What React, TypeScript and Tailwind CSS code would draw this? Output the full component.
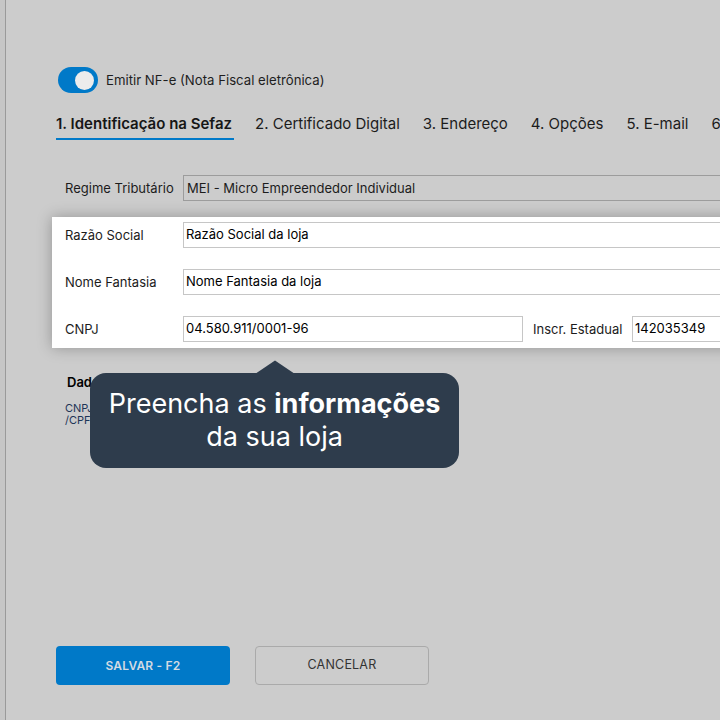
import React from "react";

export default function App() {
  return (
    <div className="w-[720px] h-[720px] bg-[#cccccc] flex overflow-hidden relative font-['Inter',sans-serif] text-[#1c1c1c]">
      <div className="w-[6px] shrink-0 bg-[#c6c6c6] border-r border-[#9a9a9a]" />
      <div className="flex-1 flex flex-col pl-[50px] pt-[67px] pb-[35px] min-w-0">
        <div className="flex items-center gap-2 ml-[2px] h-[26px]">
          <div className="w-[40px] h-[26px] rounded-full bg-[#0079c8] flex items-center justify-end pr-[4px]">
            <div className="w-[19px] h-[19px] rounded-full bg-[#ececec]" />
          </div>
          <span className="text-[13.2px] text-[#1e1e1e] pt-[2px]">Emitir NF-e (Nota Fiscal eletrônica)</span>
        </div>

        <div className="flex gap-[23px] mt-[21px] text-[15px] leading-[20px] whitespace-nowrap">
          <div className="font-semibold pb-[4px] border-b-2 border-[#0079c8] pr-[2px] text-[#161616] -mr-[2px]">1. Identificação na Sefaz</div>
          <div className="pb-[4px]">2. Certificado Digital</div>
          <div className="pb-[4px]">3. Endereço</div>
          <div className="pb-[4px]">4. Opções</div>
          <div className="pb-[4px]">5. E-mail</div>
          <div className="pb-[4px]">6. Outros</div>
        </div>

        <div className="flex items-center mt-[35px] pl-[9px] -mr-[20px] h-[26px] text-[13px]">
          <span className="w-[118px] shrink-0 pt-[1px]">Regime Tributário</span>
          <div className="flex-1 h-[26px] border border-[#9c9c9c] flex items-center px-[3px] pt-[1px]">
            MEI - Micro Empreendedor Individual
          </div>
        </div>

        <div className="mt-[16px] -ml-[4px] -mr-[20px] bg-white pl-[13px] pt-[5px] pb-[6px] flex flex-col gap-[21px] text-[13px] shadow-[0_0_14px_rgba(0,0,0,0.28)]">
          <div className="flex items-center h-[26px]">
            <span className="w-[118px] shrink-0 pt-[1px]">Razão Social</span>
            <div className="flex-1 h-[26px] border border-[#c6c6c6] flex items-center px-[2px] text-black">Razão Social da loja</div>
          </div>
          <div className="flex items-center h-[26px]">
            <span className="w-[118px] shrink-0 pt-[1px]">Nome Fantasia</span>
            <div className="flex-1 h-[26px] border border-[#c6c6c6] flex items-center px-[2px] text-black">Nome Fantasia da loja</div>
          </div>
          <div className="flex items-center h-[26px]">
            <span className="w-[118px] shrink-0 pt-[1px]">CNPJ</span>
            <div className="w-[340px] shrink-0 h-[26px] border border-[#c6c6c6] flex items-center px-[2px] text-black">04.580.911/0001-96</div>
            <span className="ml-[10px] w-[99px] shrink-0 pt-[1px]">Inscr. Estadual</span>
            <div className="flex-1 h-[26px] border border-[#c6c6c6] flex items-center px-[2px] text-black">142035349</div>
          </div>
        </div>

        <div className="mt-[26px] pl-[11px] text-[13px] leading-[16px] font-semibold text-black">Dados do Contador</div>
        <div className="mt-[12px] pl-[9px] text-[11px] leading-[12px] text-[#1d3557] w-[40px]">
          CNPJ
          <br />/CPF
        </div>

        <div className="mt-auto flex gap-[25px]">
          <button className="w-[174px] h-[39px] rounded-[4px] bg-[#0079c8] text-[#d3dbe3] text-[12px] font-semibold tracking-[0.2px]">SALVAR - F2</button>
          <button className="w-[174px] h-[39px] rounded-[4px] border border-[#aaaaaa] text-[#333333] text-[12.5px] font-normal tracking-[0.2px]">CANCELAR</button>
        </div>
      </div>

      <div className="absolute left-[90px] top-[373px] w-[369px] h-[95px] rounded-[16px] bg-[#2e3c4c] flex flex-col items-center justify-center text-white text-[27px] leading-[33px] pb-[1px]">
        <svg className="absolute left-[164px] -top-[13px]" width="42" height="14" viewBox="0 0 42 14">
          <polygon points="1,14 21,0.5 41,14" fill="#2e3c4c" />
        </svg>
        <div>
          Preencha as <span className="font-bold">informações</span>
        </div>
        <div>da sua loja</div>
      </div>
    </div>
  );
}
